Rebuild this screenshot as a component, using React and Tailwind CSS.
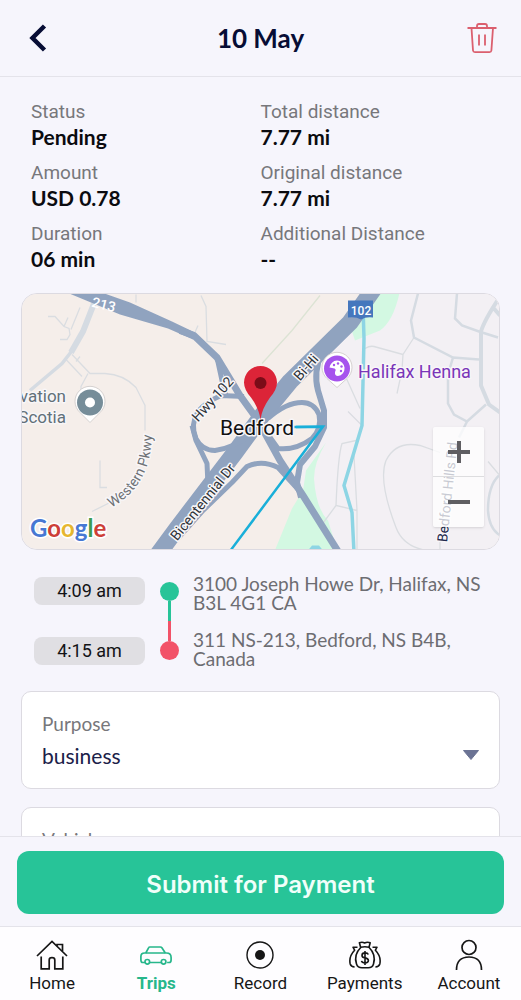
import React, { useState } from 'react';

const details = [
  { label: 'Status', value: 'Pending' },
  { label: 'Total distance', value: '7.77 mi' },
  { label: 'Amount', value: 'USD 0.78' },
  { label: 'Original distance', value: '7.77 mi' },
  { label: 'Duration', value: '06 min' },
  { label: 'Additional Distance', value: '--' },
];

const HomeIcon = () => (
  <svg width="32" height="32" viewBox="0 0 32 32" fill="none" stroke="currentColor" strokeWidth="1.7">
    <path d="M1 17 16 2.5 31 17" />
    <path d="M21 7V5.5h5.5V12" />
    <path d="M5.2 17.5v12.3h8V21q0-2.3 2.8-2.3t2.8 2.3v8.8h8V17.5" />
  </svg>
);

const CarIcon = () => (
  <svg width="32" height="32" viewBox="0 0 32 32" fill="none" stroke="currentColor" strokeWidth="1.7" strokeLinejoin="round">
    <path d="M5 23.5H2.8Q.9 23.5.9 21v-3.5q0-3.5 3.6-3.5h22q4.6 0 4.6 4.5V21q0 2.5-2 2.5h-2M9.6 23.5h12" />
    <path d="M5.8 14 8.7 8.6Q9 8 9.8 8h10.6q1 0 1.5.7l3.4 5.3" />
    <circle cx="7.3" cy="22.8" r="2.3" />
    <circle cx="23.6" cy="22.8" r="2.3" />
  </svg>
);

const RecordIcon = () => (
  <svg width="32" height="32" viewBox="0 0 32 32" fill="none" stroke="currentColor">
    <circle cx="16" cy="16" r="13" strokeWidth="1.4" />
    <circle cx="16" cy="16" r="5" fill="currentColor" stroke="none" />
  </svg>
);

const MoneyIcon = () => (
  <svg width="32" height="32" viewBox="0 0 32 32" fill="none" stroke="currentColor" strokeWidth="1.6" strokeLinejoin="round">
    <path d="M11.6 8.2 10.4 3.8q2.8-1.3 5.2.2 2.7-1.5 5.6-.2L20 8.2q-4-1-8.4 0Z" />
    <path d="M12 8.2C5.5 14.5 6.2 21 7.5 25q1.2 3.8 5.5 3.8h6.2q4.2 0 5.3-3.8c1.2-4 1.8-10.5-4.6-16.8" />
    <path d="M8.5 8.2H4l1.6 3C1 16 .3 21 1.2 25q.8 2.8 4.4 3M23.5 8.2H28l-1.6 3c4.6 4.8 5.3 9.8 4.4 13.8q-.8 2.8-4.4 3" />
    <path d="M19.3 15.6q-.6-1.7-3.3-1.7-3 0-3 2.5 0 2 3 2.5 3.4.5 3.4 2.7 0 2.3-3.4 2.3-3 0-3.500-2M16 12v14" />
  </svg>
);

const AccountIcon = () => (
  <svg width="32" height="32" viewBox="0 0 32 32" fill="none" stroke="currentColor" strokeWidth="1.7">
    <circle cx="16" cy="8.5" r="7" />
    <path d="M3.5 31q0-13 12.5-13t12.5 13" />
  </svg>
);

const navItems = [
  { icon: HomeIcon, label: 'Home', path: '#home' },
  { icon: CarIcon, label: 'Trips', path: '#trips' },
  { icon: RecordIcon, label: 'Record', path: '#record' },
  { icon: MoneyIcon, label: 'Payments', path: '#payments' },
  { icon: AccountIcon, label: 'Account', path: '#account' },
];

const TripMap = () => (
  <svg
    viewBox="22 293 477 256"
    preserveAspectRatio="xMidYMid slice"
    className="block w-full h-full font-[Roboto,sans-serif]"
    role="img"
    aria-label="Trip map"
  >
    {/* Land and parks */}
    <rect x="0" y="280" width="540" height="290" fill="#f5eeea" />
    <path d="M375 280 318 358 325 428 300 465V495L340 560H540V280Z" fill="#f3f0f4" />
    <path d="M376 290H400Q394 320 380 330L355 340 350 325Z" fill="#d3f8e2" />
    <path d="M326 442Q314 462 314 478 316 508 328 520L338 552H274L292 508 303 490 306 470Z" fill="#d3f8e2" />

    {/* Local streets */}
    <g fill="none" stroke="#dadde1" strokeWidth="1.3">
      <path d="M48 316H55L64 326 69 328 70 334 67 339H60M64 326 68 317M71 329 80 307" />
      <path d="M72 354 90 373H105Q124 374 136 387L145 405V430M66 359 82 376M76 361 80 356M88 373 81 386V392" />
      <path d="M100 460V487H107M92 511 110 502M136 302V294M194 334 198 325M201 295 206 306 207 341 226 344" />
      <path d="M262 363 292 330 320 295" stroke="#dce3d4" />
      <path d="M365 348Q370 345 374 346L403 354M414 337 403 354 402 370 397 393M346 377 360 408M348 411 362 425M356 440 342 443Q338 455 336 505L357 510M336 505 322 524M354 455 357 510V550" />
      <path d="M440 550V541M440 551Q405 551 396 527 378 480 386 460 396 440 420 445L440 452M488 461 499 474" />
    </g>
    <g fill="none" stroke="#d5dbe2" strokeWidth="2.5">
      <path d="M418 293 411 320 414 337 453 357 479 359M457 293 455 318 462 325 479 331 498 337M453 357 448 374V403L454 414 467 421 486 404M467 421 459 437" />
      <path d="M499 475Q488 485 488 510 489 528 500 535" />
      <path d="M500 296Q484 320 481 331V385L489 404 500 412M493 307 500 315" strokeWidth="4" />
    </g>
    <path d="M94 303 83 331 71 352" fill="none" stroke="#d5dbe2" strokeWidth="6" />
    <path d="M73 349 62 363 30 390" fill="none" stroke="#d5dbe2" strokeWidth="3.5" />

    {/* Water */}
    <path d="M363 305 364 338 362 425 344 485 352 512 354 552" fill="none" stroke="#8dd5e4" strokeWidth="3.5" />
    <path d="M308 550 312 545H319L323 550Z" fill="#8dd5e4" />

    {/* Highways */}
    <path d="M62 290H96L130 302 172 321 195 332 193 339 168 328 120 314Z" fill="#90a3bf" />
    <g fill="none" stroke="#90a3bf" strokeWidth="5" strokeLinejoin="round">
      <path d="M180 330 194 335 217 357 240 395 258 420 280 460 303 495 340 554" strokeWidth="7" />
      <path d="M152 562 177 528 235 452 262 415 290 381 350 322 376 285" strokeWidth="17" />
      <path d="M217 357 222 380 226 395" />
      <path d="M244 396 221 395Q205 402 198 411 190 424 196 438 202 450 215 450 232 448 252 434" />
      <path d="M192 425 196 440 207 463 208 485" />
      <path d="M176 540 202 511 232 482 247 466Q262 459 278 467L301 492" />
      <path d="M268 418Q286 402 302 402 314 402 319 414 322 428 312 438 296 450 278 448L268 434" />
      <path d="M322 350Q313 372 318 390L324 410V427L315 446 300 464 297 482 301 497" strokeWidth="6" />
    </g>

    {/* Recorded route */}
    <path d="M294 426.5 323 426 229 552" fill="none" stroke="#19afd9" strokeWidth="2.5" />

    {/* Road names */}
    <path id="western" d="M111 507Q151 486 152 434" fill="none" />
    <g fill="#2e3338" stroke="#f8f6f8" strokeWidth="3" paintOrder="stroke" strokeLinejoin="round" fontSize="14">
      <text fill="#6d7175"><textPath href="#western">Western Pkwy</textPath></text>
      <text transform="translate(198 422) rotate(-48)">Hwy 102</text>
      <text transform="translate(177 541) rotate(-51)">Bicentennial Dr</text>
      <text transform="translate(300 381) rotate(-49)">Bi-Hi</text>
      <text transform="translate(447 542) rotate(-84)" fill="#232a4e">Bedford Hills Rd</text>
    </g>
    <text transform="translate(91 306) rotate(14)" fontSize="14" fontWeight="500" fill="#fff">213</text>

    {/* Route shield */}
    <path d="M348 300H373V317Q366 316 361 319 356 316 348 317Z" fill="#4577bd" />
    <text x="361" y="314" fontSize="12" fontWeight="500" textAnchor="middle" fill="#fff">102</text>

    {/* Places */}
    <g stroke="#f8f6f8" strokeWidth="3" paintOrder="stroke" strokeLinejoin="round">
      <text x="66" y="401" fontSize="17" textAnchor="end" fill="#627078">vation</text>
      <text x="66" y="422" fontSize="17" textAnchor="end" fill="#627078">Scotia</text>
      <text x="358" y="377" fontSize="18" fill="#7a35b8">Halifax Henna</text>
      <text x="257" y="434" fontSize="21" textAnchor="middle" fill="#111">Bedford</text>
    </g>
    <path d="M296 426.5H323" stroke="#19afd9" strokeWidth="2.5" />

    <path d="M90 422 80 412A15 15 0 1 1 100 412Z" fill="#fff" stroke="#d5d1d0" />
    <circle cx="90" cy="402" r="13" fill="#768d99" />
    <circle cx="90" cy="402" r="5" fill="#fff" />

    <path d="M337 387 327 378A15 15 0 1 1 347 378Z" fill="#fff" stroke="#d5d1d0" />
    <circle cx="337" cy="368" r="13" fill="#a653ed" />
    <path d="M337 360a8 8 0 0 0-7.5 7l5 1q2 1 .5 3.5-.5 4 3 4a7.8 7.8 0 0 0-1-15.500Z" fill="#fff" />
    <g fill="#a653ed">
      <circle cx="334" cy="364.5" r="1.2" />
      <circle cx="338" cy="363" r="1.2" />
      <circle cx="341.5" cy="366" r="1.2" />
      <circle cx="341" cy="370.5" r="1.2" />
    </g>

    {/* Destination pin */}
    <path d="M260.5 419Q259 408 251 397 244 389 244 382A16.5 16.5 0 0 1 277 382Q277 389 270 397 262 408 260.5 419Z" fill="#dc2438" />
    <circle cx="260.5" cy="382.5" r="6" fill="#7b0c18" />

    <text x="30" y="536" fontSize="24" fontWeight="700" stroke="#fff" strokeWidth="3" paintOrder="stroke" fontFamily="Lato, sans-serif">
      <tspan fill="#4778d3">G</tspan>
      <tspan fill="#cd3f38">o</tspan>
      <tspan fill="#e6b62f">o</tspan>
      <tspan fill="#4778d3">g</tspan>
      <tspan fill="#3d9c50">l</tspan>
      <tspan fill="#cd3f38">e</tspan>
    </text>
  </svg>
);

const SelectCard = ({ id, label, options }) => {
  const [value, setValue] = useState(options[0]);

  return (
    <div className="mx-[21px] h-[98px] shrink-0 rounded-[10px] border border-[#dcdae1] bg-white px-5 pt-5">
      <label htmlFor={id} className="block text-[19px] leading-6 text-[#77777b]">{label}</label>
      <div className="relative mt-1.5">
        <select
          id={id}
          value={value}
          onChange={(e) => setValue(e.target.value)}
          className="block w-full appearance-none bg-transparent text-[21px] leading-7 text-[#1b2149]"
        >
          {options.map((option) => (
            <option key={option}>{option}</option>
          ))}
        </select>
        <svg className="pointer-events-none absolute right-0 top-2" width="16" height="10" viewBox="0 0 16 10">
          <path d="M.5.5h15L8 9.500Z" fill="#6b7394" stroke="#6b7394" strokeLinejoin="round" />
        </svg>
      </div>
    </div>
  );
};

const App = () => {
  const activePath = '#trips';

  return (
    <div className="flex h-screen flex-col overflow-hidden bg-[#f6f5fc] font-[Lato,sans-serif]">
      {/* Header */}
      <header className="flex h-[77px] shrink-0 items-center justify-between border-b border-[#e4e3ea] px-6">
        <button aria-label="Back" className="flex w-8 justify-start pl-1">
          <svg width="20" height="30" viewBox="0 0 20 30" fill="none" stroke="#070d35" strokeWidth="4.5">
            <path d="M16.5 3 4.5 15l12 12" />
          </svg>
        </button>
        <h1 className="text-[26px] font-bold leading-8 text-[#070d35]">10 May</h1>
        <button aria-label="Delete trip" className="flex w-8 justify-end">
          <svg width="30" height="32" viewBox="0 0 30 32" fill="none" stroke="#db5f6e" strokeWidth="1.8" strokeLinejoin="round">
            <path d="M.5 6h29M10 6V4q0-2 2-2h6q2 0 2 2v2" />
            <path d="M4.5 6 6 28.5q.2 1.7 2 1.7h14.5q1.7 0 1.9-1.7L26 6M12 12.500V23.5M18 12.500V23.5" />
          </svg>
        </button>
      </header>

      {/* Trip details */}
      <main className="flex min-h-0 flex-1 flex-col overflow-y-auto [scrollbar-width:none]">
        <dl className="grid shrink-0 grid-cols-2 gap-y-[11px] px-[31px] pt-[23px]">
          {details.map((item) => (
            <div key={item.label}>
              <dt className="font-[Roboto,sans-serif] text-[19px] leading-6 text-[#77777b]">{item.label}</dt>
              <dd className="text-[21px] font-bold leading-[26px] text-[#0b0b0f]">{item.value}</dd>
            </div>
          ))}
        </dl>

        <section className="relative mx-[21px] mt-[21px] h-[257px] shrink-0 overflow-hidden rounded-[16px] border border-[#dcdae1]">
          <TripMap />
          <div className="absolute bottom-[22px] right-[15px] flex w-[51px] flex-col divide-y divide-[#dddddf] rounded-xs bg-white/75 shadow">
            <button aria-label="Zoom in" className="flex h-[50px] items-center justify-center">
              <svg width="24" height="24" viewBox="0 0 24 24" stroke="#5f5e62" strokeWidth="4">
                <path d="M1 12h22M12 1v22" />
              </svg>
            </button>
            <button aria-label="Zoom out" className="flex h-[50px] items-center justify-center">
              <svg width="24" height="24" viewBox="0 0 24 24" stroke="#5f5e62" strokeWidth="4">
                <path d="M1 12h22" />
              </svg>
            </button>
          </div>
        </section>

        <section className="mb-[23px] mt-6 flex shrink-0 px-[34px]">
          <div className="flex w-[111px] shrink-0 flex-col gap-8 pt-[3px] font-[Roboto,sans-serif] text-lg text-[#131316]">
            <time className="rounded-lg bg-[#e0dfe3] text-center leading-7">4:09 am</time>
            <time className="rounded-lg bg-[#e0dfe3] text-center leading-7">4:15 am</time>
          </div>
          <div className="flex w-12 shrink-0 flex-col items-center pt-2">
            <span className="size-[19px] rounded-full bg-[#27c498]" />
            <span className="h-5 w-[3px] bg-[#27c498]" />
            <span className="h-5 w-[3px] bg-[#f25268]" />
            <span className="size-[19px] rounded-full bg-[#f25268]" />
          </div>
          <div className="flex flex-1 flex-col gap-[18px] text-[19px] leading-[19px] text-[#6d6d72]">
            <p>3100 Joseph Howe Dr, Halifax, NS B3L 4G1 CA</p>
            <p>311 NS-213, Bedford, NS B4B, Canada</p>
          </div>
        </section>

        <div className="flex shrink-0 flex-col gap-[18px] pb-5">
          <SelectCard id="purpose" label="Purpose" options={['business', 'personal']} />
          <SelectCard id="vehicle" label="Vehicle" options={['Car', 'Truck']} />
        </div>
      </main>

      {/* Submit */}
      <div className="shrink-0 border-y border-[#e4e3ea] px-[17px] pb-3 pt-[14px]">
        <button className="h-[63px] w-full rounded-xl bg-[#27c498] pt-1 font-[Inter,sans-serif] text-2xl font-semibold text-[#f0fffa]">
          Submit for Payment
        </button>
      </div>

      {/* Bottom navigation */}
      <nav className="grid h-[73px] shrink-0 grid-cols-5 bg-[#fefdff] font-[Roboto,sans-serif] text-[17px]">
        {navItems.map((item) => {
          const Icon = item.icon;
          const isActive = item.path === activePath;
          return (
            <a
              key={item.path}
              href={item.path}
              className={`flex flex-col items-center pt-3 ${isActive ? 'font-bold text-[#27b78b]' : 'text-[#161616]'}`}
            >
              <Icon />
              <span className="leading-6">{item.label}</span>
            </a>
          );
        })}
      </nav>
    </div>
  );
};

export default App;
